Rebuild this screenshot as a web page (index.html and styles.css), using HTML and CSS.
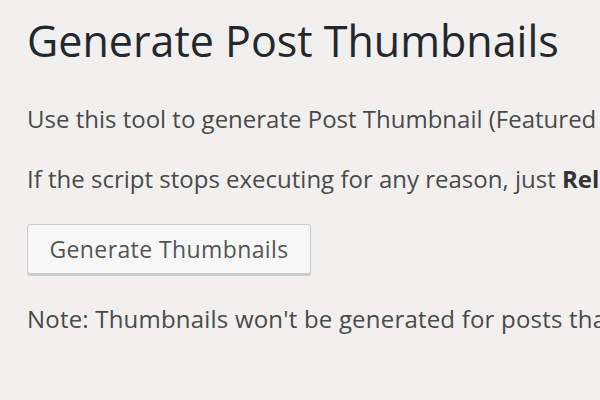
FILE: index.html
```html
<!DOCTYPE html>
<html>
<head>
<meta charset="utf-8">
<link rel="stylesheet" href="styles.css">
</head>
<body>
<div class="wrap">
  <h1 class="title">Generate Post Thumbnails</h1>
  <p class="para first">Use this tool to generate Post Thumbnail (Featured Thumbnail) for your Posts.</p>
  <p class="para second">If the script stops executing for any reason, just <strong>Reload</strong> the page and it will continue from where it stopped.</p>
  <div class="actions"><button class="btn" type="button">Generate Thumbnails</button></div>
  <p class="para note">Note: Thumbnails won't be generated for posts that already have post thumbnail or Featured Image set.</p>
</div>
</body>
</html>
```
FILE: styles.css
```css
html, body {
  margin: 0;
  padding: 0;
  background: #f1f0ef;
  overflow: hidden;
}
body {
  width: 600px;
  height: 400px;
  font-family: "Open Sans", "Noto Sans", sans-serif;
}
.wrap {
  padding: 12px 0 0 27px;
  white-space: nowrap;
  overflow: hidden;
}
.title {
  margin: 0;
  font-size: 43px;
  line-height: 58px;
  font-weight: 400;
  color: #23282d;
}
.para {
  margin: 0;
  font-size: 24px;
  line-height: 32px;
  color: #4a4a4a;
}
.para strong {
  font-weight: 700;
  color: #333;
}
.first {
  margin-top: 33px;
}
.second {
  margin-top: 28px;
}
.actions {
  margin-top: 29px;
}
.btn {
  display: block;
  box-sizing: border-box;
  width: 284px;
  height: 50px;
  padding: 0 10px;
  font-family: "Open Sans", "Noto Sans", sans-serif;
  font-size: 23px;
  letter-spacing: 0.4px;
  color: #555;
  background: #f7f7f7;
  border: 1px solid #ccc;
  border-radius: 3px;
  box-shadow: 0 2px 0 #ccc;
  text-align: center;
}
.note {
  margin-top: 29px;
  letter-spacing: 0.2px;
}
```
